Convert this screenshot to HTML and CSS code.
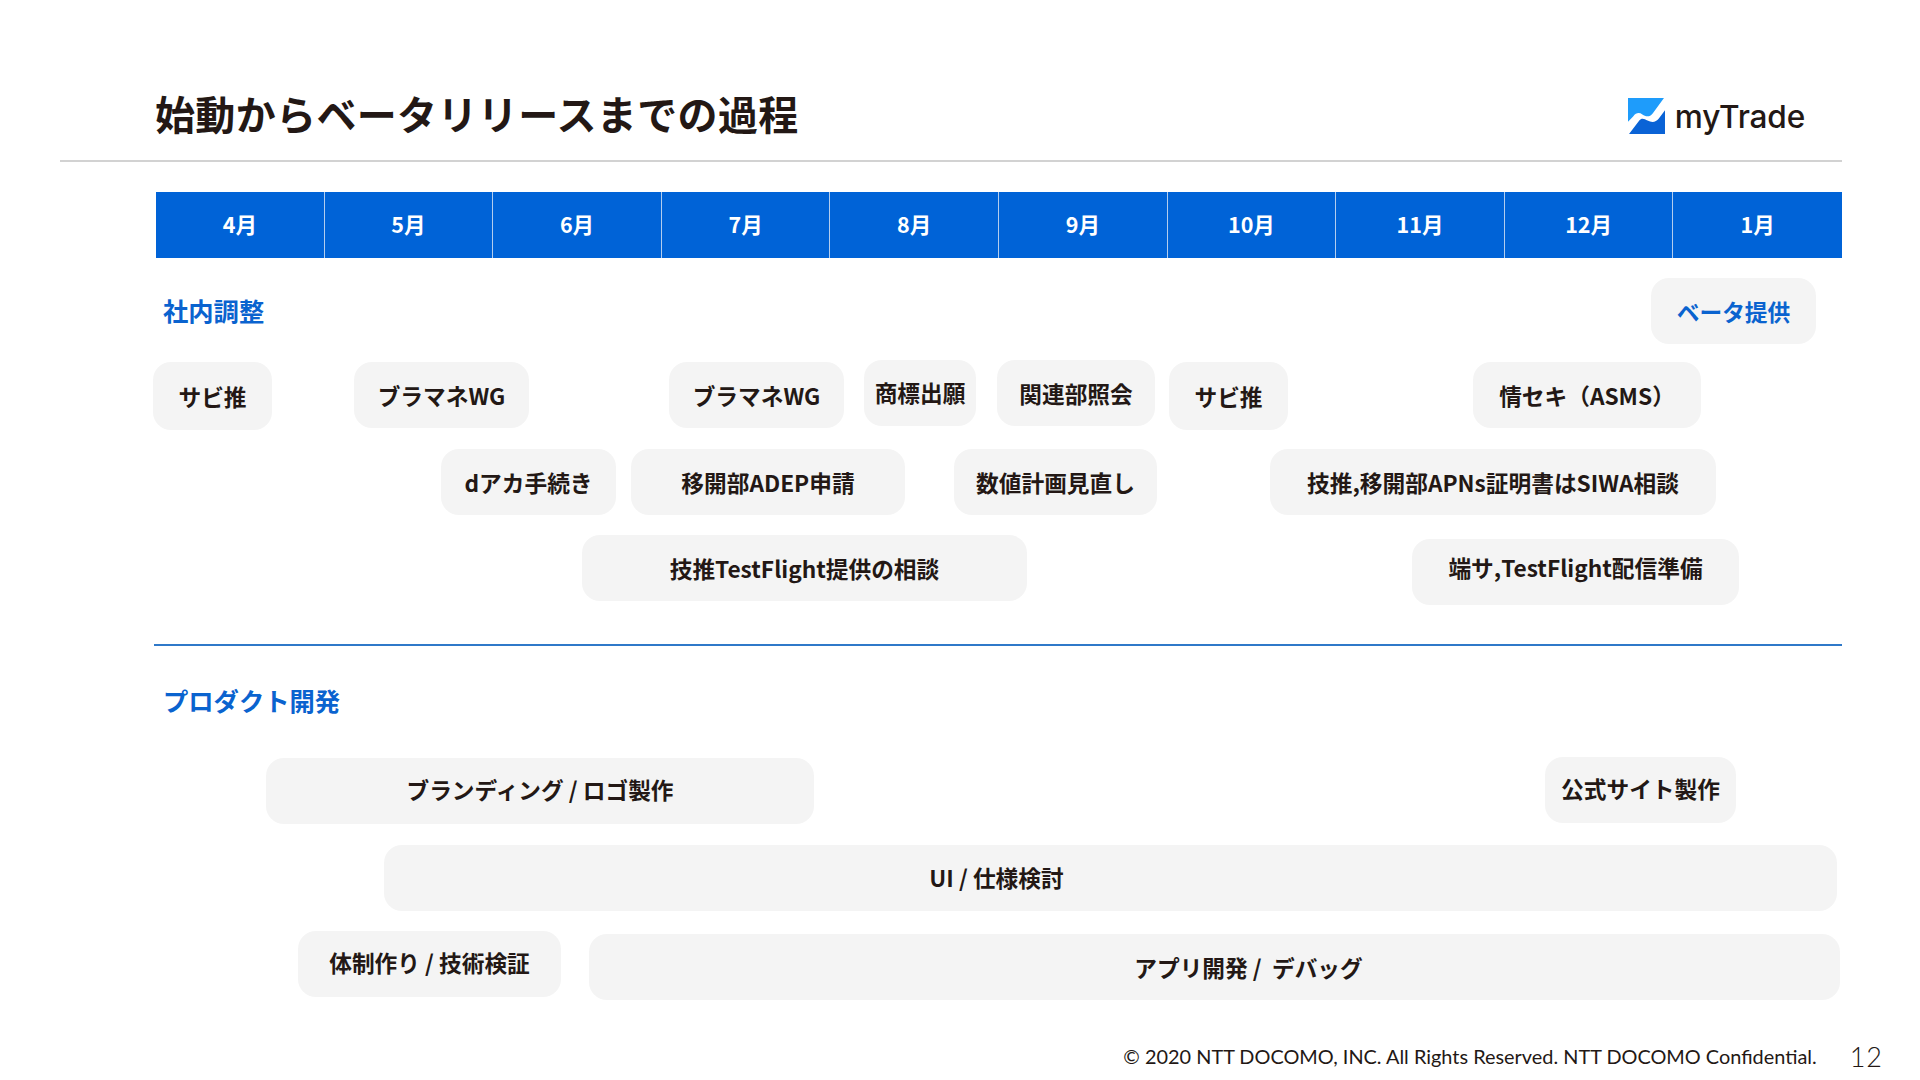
FILE: index.html
```html
<!DOCTYPE html>
<html lang="ja">
<head>
<meta charset="utf-8">
<title>始動からベータリリースまでの過程</title>
<link rel="stylesheet" href="styles.css">
</head>
<body>
<main class="slide">
  <header class="head">
    <h1 class="title">始動からベータリリースまでの過程</h1>
    <div class="brand">
      <svg class="mark" viewBox="0 0 36 36" aria-hidden="true">
        <path fill="#1e9cfb" d="M0 0H35L24 15C21 19 17 18 14 16C11 14 8 14 5 18L0 23Z"/>
        <path fill="#0a63d6" d="M1 35L11 22C13 19 16 20 19 22C23 24 27 24 30 20L36 12V35Z"/>
      </svg>
      <span class="brand-name">myTrade</span>
    </div>
  </header>

  <div class="months">
    <div class="month">4月</div><div class="month">5月</div><div class="month">6月</div><div class="month">7月</div><div class="month">8月</div>
    <div class="month">9月</div><div class="month">10月</div><div class="month">11月</div><div class="month">12月</div><div class="month">1月</div>
  </div>

  <section class="lane lane-org">
    <h2 class="lane-title">社内調整</h2>
    <div class="chip chip-accent" style="left:1497px;top:20px;width:165px">ベータ提供</div>
    <div class="chip chip-tall" style="left:-1px;top:104px;width:119px">サビ推</div>
    <div class="chip" style="left:200px;top:104px;width:175px">ブラマネWG</div>
    <div class="chip" style="left:515px;top:104px;width:175px">ブラマネWG</div>
    <div class="chip up1" style="left:710px;top:102px;width:112px">商標出願</div>
    <div class="chip" style="left:843px;top:102px;width:158px">関連部照会</div>
    <div class="chip chip-tall" style="left:1015px;top:104px;width:119px">サビ推</div>
    <div class="chip" style="left:1319px;top:104px;width:228px">情セキ（ASMS）</div>
    <div class="chip" style="left:287px;top:191px;width:175px">dアカ手続き</div>
    <div class="chip" style="left:477px;top:191px;width:274px">移開部ADEP申請</div>
    <div class="chip" style="left:800px;top:191px;width:203px">数値計画見直し</div>
    <div class="chip" style="left:1116px;top:191px;width:446px">技推,移開部APNs証明書はSIWA相談</div>
    <div class="chip" style="left:428px;top:277px;width:445px">技推TestFlight提供の相談</div>
    <div class="chip up5" style="left:1258px;top:281px;width:327px">端サ,TestFlight配信準備</div>
  </section>

  <section class="lane lane-dev">
    <h2 class="lane-title">プロダクト開発</h2>
    <div class="chip up2" style="left:112px;top:112px;width:548px">ブランディング / ロゴ製作</div>
    <div class="chip up2" style="left:1391px;top:111px;width:191px">公式サイト製作</div>
    <div class="chip chip-ui up1" style="left:230px;top:199px;width:1453px">UI / 仕様検討</div>
    <div class="chip up2" style="left:144px;top:285px;width:263px">体制作り / 技術検証</div>
    <div class="chip chip-app" style="left:435px;top:288px;width:1251px">アプリ開発 /&nbsp; デバッグ</div>
  </section>

  <footer class="foot">
    <span class="copy">© 2020 NTT DOCOMO, INC. All Rights Reserved. NTT DOCOMO Confidential.</span>
    <span class="page">12</span>
  </footer>
</main>
</body>
</html>
```

FILE: styles.css
```css
* { box-sizing: border-box; }
html, body { margin: 0; padding: 0; background: #fff; }
.slide {
  width: 1920px;
  height: 1080px;
  overflow: hidden;
  display: flex;
  flex-direction: column;
  color: #231815;
  font-family: "Noto Sans CJK JP", "Noto Sans", sans-serif;
}
.head {
  height: 162px;
  margin-left: 60px;
  width: 1782px;
  padding: 0 0 0 95px;
  border-bottom: 2px solid #d2d2d2;
  display: flex;
  justify-content: space-between;
  align-items: flex-start;
}
.title {
  margin: 87px 0 0;
  font-size: 40px;
  line-height: 52px;
  font-weight: 700;
  letter-spacing: 0.35px;
}
.brand {
  display: flex;
  align-items: center;
  gap: 10px;
  margin: 98px 37px 0 0;
}
.mark { width: 37px; height: 37px; display: block; }
.brand-name {
  font-family: "Inter", sans-serif;
  font-size: 31.6px;
  line-height: 36px;
  font-weight: 500;
  letter-spacing: -0.2px;
}
.months {
  margin: 30px 0 0 156px;
  width: 1686px;
  height: 66px;
  display: grid;
  grid-template-columns: repeat(10, 1fr);
  background: #0063d7;
}
.month {
  display: flex;
  align-items: center;
  justify-content: center;
  padding-bottom: 4px;
  color: #fff;
  font-size: 21.5px;
  font-weight: 700;
  border-right: 1.5px solid #b3cdee;
}
.month:last-child { border-right: 0; }
.lane { position: relative; margin-left: 154px; width: 1688px; }
.lane-org { height: 388px; border-bottom: 2px solid #2f79c9; }
.lane-dev { height: 390px; }
.lane-title {
  margin: 0;
  padding: 35px 0 0 9px;
  font-size: 25.3px;
  line-height: 34px;
  font-weight: 700;
  color: #0a63cf;
}
.lane-dev .lane-title { padding-top: 37px; }
.chip {
  position: absolute;
  height: 66px;
  display: flex;
  align-items: center;
  justify-content: center;
  background: #f4f4f4;
  border-radius: 18px;
  font-size: 22.7px;
  font-weight: 700;
  white-space: nowrap;
}
.chip-tall { height: 68px; }
.chip-accent { color: #0a63cf; }
.chip-ui { padding-right: 228px; }
.chip-app { padding-left: 68px; }
.up1 { padding-bottom: 2px; }
.up2 { padding-bottom: 4px; }
.up5 { padding-bottom: 10px; }
.foot {
  display: flex;
  justify-content: flex-end;
  align-items: center;
  gap: 33px;
  height: 40px;
  padding-right: 37px;
}
.copy { font-family: "Lato", sans-serif; font-size: 19.9px; color: #231815; }
.page { font-family: "Lato", sans-serif; font-size: 27px; font-weight: 300; letter-spacing: 1px; color: #231815; }
```
